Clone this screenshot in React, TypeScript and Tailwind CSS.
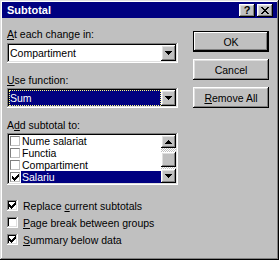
import type { ReactNode } from 'react'

// Win98-ish bevels
const raised =
  'shadow-[inset_-1px_-1px_#000,inset_1px_1px_#fff,inset_-2px_-2px_#808080,inset_2px_2px_#dfdfdf]'
const sunken =
  'shadow-[inset_-1px_-1px_#fff,inset_1px_1px_#808080,inset_-2px_-2px_#dfdfdf,inset_2px_2px_#000]'

function Check({ size = 7 }: { size?: number }) {
  return (
    <svg width={size} height={size} viewBox="0 0 7 7" shapeRendering="crispEdges" aria-hidden>
      <path d="M6 0h1v1h-1zM5 1h2v1h-2zM0 2h1v1h-1zM4 2h3v1h-3zM0 3h2v1h-2zM3 3h3v1h-3zM0 4h5v1h-5zM1 5h3v1h-3zM2 6h1v1h-1z" fill="#000" />
    </svg>
  )
}

function Arrow({ up = false }: { up?: boolean }) {
  return (
    <svg width="7" height="4" viewBox="0 0 7 4" shapeRendering="crispEdges" aria-hidden>
      <path d={up ? 'M3 0h1v1h-1zM2 1h3v1h-3zM1 2h5v1h-5zM0 3h7v1h-7z' : 'M0 0h7v1h-7zM1 1h5v1h-5zM2 2h3v1h-3zM3 3h1v1h-1z'} fill="#000" />
    </svg>
  )
}

function Combo({ value, selected = false }: { value: string; selected?: boolean }) {
  return (
    <div className={`flex h-[20px] w-[171px] bg-white p-[2px] ${sunken}`}>
      <div className="flex min-w-0 flex-1 items-center">
        <span
          className={`flex h-full flex-1 items-center pl-[1px] ${
            selected ? 'bg-[#000080] text-white outline-1 outline-dotted outline-[#ffff80] -outline-offset-1' : 'text-black'
          }`}
        >
          {value}
        </span>
      </div>
      <div className={`flex w-[15px] items-center justify-center bg-[#c0c0c0] ${raised}`}>
        <Arrow />
      </div>
    </div>
  )
}

function Button({ children, primary = false }: { children: ReactNode; primary?: boolean }) {
  return (
    <div
      className={`flex h-[21px] w-[76px] items-center justify-center bg-[#c0c0c0] ${
        primary
          ? 'shadow-[inset_0_0_0_1px_#000,inset_-2px_-2px_#000,inset_2px_2px_#fff,inset_-3px_-3px_#808080]'
          : raised
      }`}
    >
      {children}
    </div>
  )
}

function CheckRow({ checked, children }: { checked: boolean; children: ReactNode }) {
  return (
    <div className="flex h-[17px] items-center gap-[5px]">
      <div className={`flex h-[11px] w-[11px] items-center justify-center bg-white ${sunken}`}>
        {checked ? <Check /> : null}
      </div>
      <span>{children}</span>
    </div>
  )
}

const fields = [
  { label: 'Nume salariat', checked: false },
  { label: 'Functia', checked: false },
  { label: 'Compartiment', checked: false },
  { label: 'Salariu', checked: true },
]

export default function App() {
  return (
    <div
      className="relative h-[260px] w-[279px] bg-[#c0c0c0] text-[10.5px] leading-[12px] text-black shadow-[inset_-1px_-1px_#000,inset_1px_1px_#dfdfdf,inset_-2px_-2px_#808080,inset_2px_2px_#fff]"
      style={{ fontFamily: '"Liberation Sans", Arial, sans-serif' }}
    >
      {/* Title bar */}
      <div className="px-[2px] pt-[2px]">
        <div className="flex h-[16px] items-center justify-between bg-[#000080] pl-[5px] pr-[4px]">
          <span className="text-[11px] font-bold text-white">Subtotal</span>
          <div className="flex gap-[2px]">
            <div className={`flex h-[13px] w-[16px] items-center justify-center bg-[#c0c0c0] text-[11px] font-bold leading-none ${raised}`}>
              ?
            </div>
            <div className={`flex h-[13px] w-[16px] items-center justify-center bg-[#c0c0c0] ${raised}`}>
              <svg width="8" height="7" viewBox="0 0 8 7" shapeRendering="crispEdges" aria-hidden>
                <path d="M0 0h2v1h-2zM6 0h2v1h-2zM1 1h2v1h-2zM5 1h2v1h-2zM2 2h4v1h-4zM3 3h2v1h-2zM2 4h4v1h-4zM1 5h2v1h-2zM5 5h2v1h-2zM0 6h2v1h-2zM6 6h2v1h-2z" fill="#000" />
              </svg>
            </div>
          </div>
        </div>
      </div>

      {/* Body */}
      <div className="flex pl-[7px]">
        <div className="flex w-[171px] flex-col">
          <div className="mt-[10px]">
            <u className="underline-offset-1">A</u>t each change in:
          </div>
          <div className="mt-[3px]">
            <Combo value="Compartiment" />
          </div>
          <div className="mt-[11px]">
            <u className="underline-offset-1">U</u>se function:
          </div>
          <div className="mt-[2px]">
            <Combo value="Sum" selected />
          </div>
          <div className="mt-[11px]">
            A<u className="underline-offset-1">d</u>d subtotal to:
          </div>
          <div className={`mt-[2px] flex h-[52px] bg-white p-[2px] ${sunken}`}>
            <div className="flex flex-1 flex-col">
              {fields.map((f) => (
                <div key={f.label} className="flex h-[12px] items-center">
                  <div className="flex w-[11px] justify-end">
                    <div className="flex h-[10px] w-[10px] items-center justify-center border border-t-[#808080] border-l-[#808080] border-r-[#c0c0c0] border-b-[#c0c0c0] bg-white">
                      {f.checked ? <Check /> : null}
                    </div>
                  </div>
                  <span
                    className={`ml-[1px] flex h-full flex-1 items-center pl-[1px] ${
                      f.checked ? 'bg-[#000080] text-white' : ''
                    }`}
                  >
                    {f.label}
                  </span>
                </div>
              ))}
            </div>
            <div className="flex w-[15px] flex-col">
              <div className={`flex h-[13px] items-center justify-center bg-[#c0c0c0] ${raised}`}>
                <Arrow up />
              </div>
              <div className="h-[4px] bg-[repeating-conic-gradient(#c0c0c0_0_25%,#fff_0_50%)] bg-[length:2px_2px]" />
              <div className={`h-[15px] bg-[#c0c0c0] ${raised}`} />
              <div className="flex-1 bg-[repeating-conic-gradient(#c0c0c0_0_25%,#fff_0_50%)] bg-[length:2px_2px]" />
              <div className={`flex h-[14px] items-center justify-center bg-[#c0c0c0] ${raised}`}>
                <Arrow />
              </div>
            </div>
          </div>

          <div className="mt-[12px] flex flex-col whitespace-nowrap">
            <CheckRow checked>
              Replace <u className="underline-offset-1">c</u>urrent subtotals
            </CheckRow>
            <CheckRow checked={false}>
              <u className="underline-offset-1">P</u>age break between groups
            </CheckRow>
            <CheckRow checked>
              <u className="underline-offset-1">S</u>ummary below data
            </CheckRow>
          </div>
        </div>

        <div className="ml-[15px] mt-[13px] flex flex-col gap-[7px]">
          <Button primary>OK</Button>
          <Button>Cancel</Button>
          <Button>
            <span>
              <u className="underline-offset-1">R</u>emove All
            </span>
          </Button>
        </div>
      </div>
    </div>
  )
}
